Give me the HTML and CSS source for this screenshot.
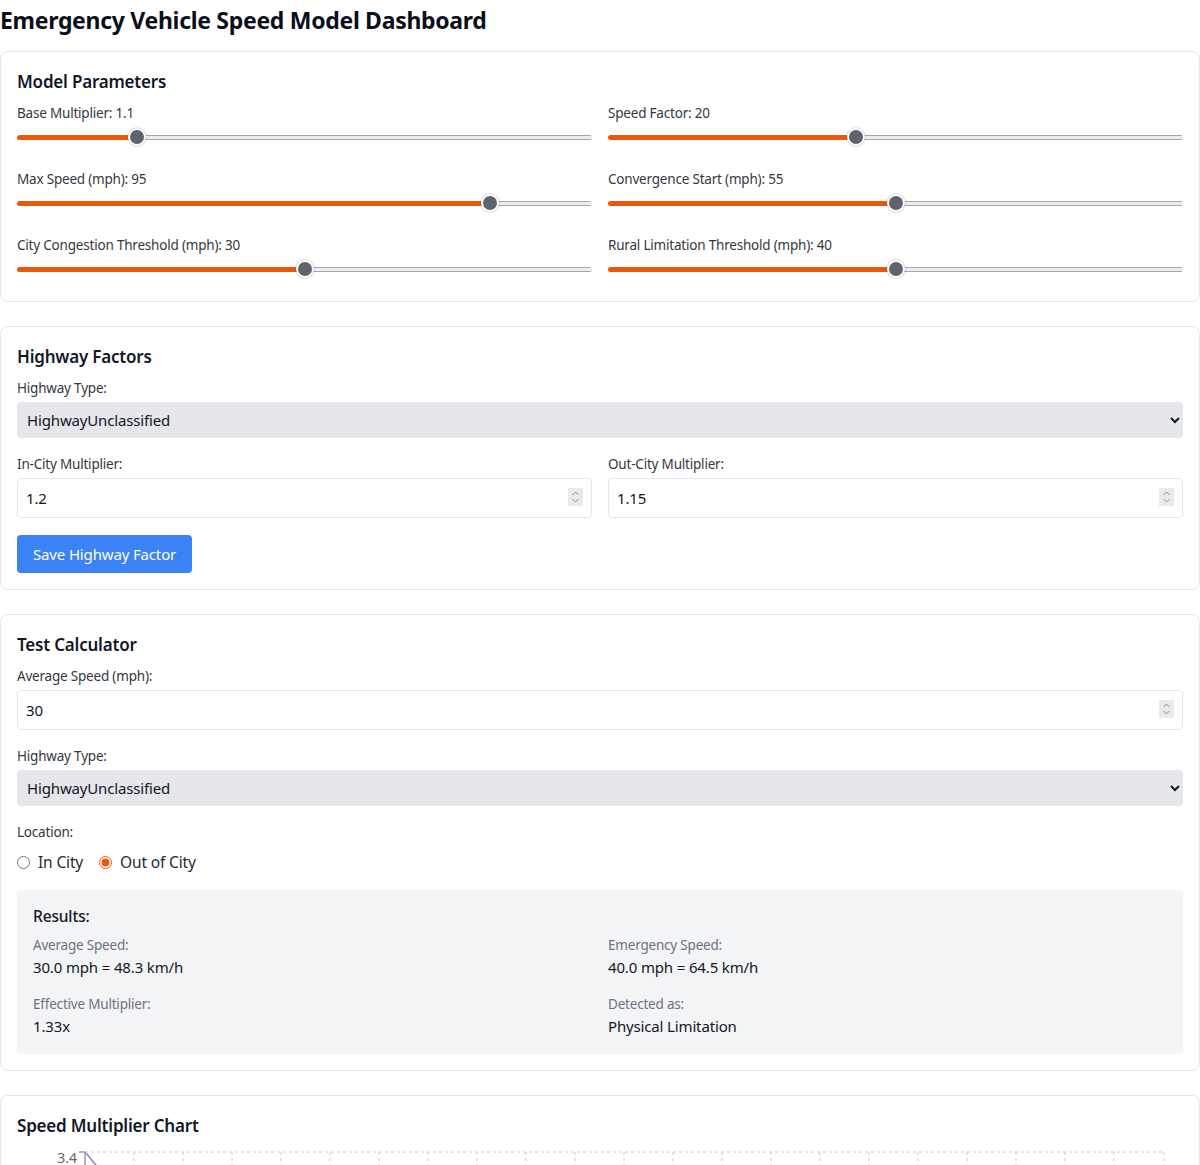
FILE: index.html
```html
<!DOCTYPE html>
<html lang="en">
<head>
<meta charset="utf-8">
<title>Emergency Vehicle Speed Model Dashboard</title>
<link rel="stylesheet" href="styles.css">
</head>
<body>
<div class="page">
  <h1 class="title">Emergency Vehicle Speed Model Dashboard</h1>

  <section class="card">
    <h2 class="card-title">Model Parameters</h2>
    <div class="param-grid">
      <div class="field-range">
        <label class="label">Base Multiplier: 1.1</label>
        <input class="slider" type="range" min="1" max="1.5" step="0.1" value="1.1" style="--f:0.2">
      </div>
      <div class="field-range">
        <label class="label">Speed Factor: 20</label>
        <input class="slider" type="range" min="5" max="40" step="1" value="20" style="--f:0.4286">
      </div>
      <div class="field-range">
        <label class="label">Max Speed (mph): 95</label>
        <input class="slider" type="range" min="70" max="100" step="1" value="95" style="--f:0.8333">
      </div>
      <div class="field-range">
        <label class="label">Convergence Start (mph): 55</label>
        <input class="slider" type="range" min="40" max="70" step="1" value="55" style="--f:0.5">
      </div>
      <div class="field-range">
        <label class="label">City Congestion Threshold (mph): 30</label>
        <input class="slider" type="range" min="10" max="50" step="1" value="30" style="--f:0.5">
      </div>
      <div class="field-range">
        <label class="label">Rural Limitation Threshold (mph): 40</label>
        <input class="slider" type="range" min="20" max="60" step="1" value="40" style="--f:0.5">
      </div>
    </div>
  </section>

  <section class="card">
    <h2 class="card-title">Highway Factors</h2>
    <div class="field">
      <label class="label">Highway Type:</label>
      <select class="select"><option>HighwayUnclassified</option></select>
    </div>
    <div class="two-col">
      <div class="field">
        <label class="label">In-City Multiplier:</label>
        <input class="number" type="number" step="0.05" value="1.2">
      </div>
      <div class="field">
        <label class="label">Out-City Multiplier:</label>
        <input class="number" type="number" step="0.05" value="1.15">
      </div>
    </div>
    <button class="btn" type="button">Save Highway Factor</button>
  </section>

  <section class="card">
    <h2 class="card-title">Test Calculator</h2>
    <div class="field">
      <label class="label">Average Speed (mph):</label>
      <input class="number" type="number" value="30">
    </div>
    <div class="field">
      <label class="label">Highway Type:</label>
      <select class="select"><option>HighwayUnclassified</option></select>
    </div>
    <div class="field">
      <label class="label">Location:</label>
      <div class="radios">
        <label class="radio"><input type="radio" name="loc"> In City</label>
        <label class="radio"><input type="radio" name="loc" checked> Out of City</label>
      </div>
    </div>
    <div class="results">
      <h3 class="results-title">Results:</h3>
      <div class="results-grid">
        <div>
          <div class="r-label">Average Speed:</div>
          <div class="r-value">30.0 mph = 48.3 km/h</div>
        </div>
        <div>
          <div class="r-label">Emergency Speed:</div>
          <div class="r-value">40.0 mph = 64.5 km/h</div>
        </div>
        <div>
          <div class="r-label">Effective Multiplier:</div>
          <div class="r-value">1.33x</div>
        </div>
        <div>
          <div class="r-label">Detected as:</div>
          <div class="r-value">Physical Limitation</div>
        </div>
      </div>
    </div>
  </section>

  <section class="card">
    <h2 class="card-title">Speed Multiplier Chart</h2>
    <svg class="chart" width="1166" height="300" viewBox="0 0 1166 300">
      <g stroke="#cccccc" stroke-dasharray="3 3" fill="none">
        <line x1="68" y1="5" x2="1147" y2="5"/>
        <line x1="117" y1="5" x2="117" y2="300"/>
        <line x1="166" y1="5" x2="166" y2="300"/>
        <line x1="215" y1="5" x2="215" y2="300"/>
        <line x1="264" y1="5" x2="264" y2="300"/>
        <line x1="313" y1="5" x2="313" y2="300"/>
        <line x1="362" y1="5" x2="362" y2="300"/>
        <line x1="411" y1="5" x2="411" y2="300"/>
        <line x1="460" y1="5" x2="460" y2="300"/>
        <line x1="509" y1="5" x2="509" y2="300"/>
        <line x1="558" y1="5" x2="558" y2="300"/>
        <line x1="607" y1="5" x2="607" y2="300"/>
        <line x1="656" y1="5" x2="656" y2="300"/>
        <line x1="705" y1="5" x2="705" y2="300"/>
        <line x1="754" y1="5" x2="754" y2="300"/>
        <line x1="803" y1="5" x2="803" y2="300"/>
        <line x1="852" y1="5" x2="852" y2="300"/>
        <line x1="901" y1="5" x2="901" y2="300"/>
        <line x1="950" y1="5" x2="950" y2="300"/>
        <line x1="999" y1="5" x2="999" y2="300"/>
        <line x1="1048" y1="5" x2="1048" y2="300"/>
        <line x1="1097" y1="5" x2="1097" y2="300"/>
        <line x1="1147" y1="5" x2="1147" y2="300"/>
      </g>
      <line x1="68" y1="5" x2="68" y2="300" stroke="#666666"/>
      <line x1="62" y1="5" x2="68" y2="5" stroke="#666666"/>
      <text x="60" y="16" text-anchor="end" class="tick">3.4</text>
      <polyline points="69,6 110,56 150,100" fill="none" stroke="#8884d8" stroke-width="1.5"/>
    </svg>
  </section>
</div>
</body>
</html>
```

FILE: styles.css
```css
* { box-sizing: border-box; }

html, body {
  margin: 0;
  padding: 0;
  background: #ffffff;
}

body {
  font-family: "Noto Sans", "Open Sans", sans-serif;
  color: #111827;
}

.page {
  width: 1200px;
}

.title {
  font-size: 23px;
  line-height: 32px;
  font-weight: 700;
  letter-spacing: -0.3px;
  margin: 4px 0 15px;
  color: #0b0f1a;
}

.card {
  border: 1px solid #e5e7eb;
  border-radius: 8px;
  padding: 16px;
  margin-bottom: 24px;
  background: #fff;
}

.card-title {
  font-size: 17px;
  line-height: 28px;
  font-weight: 600;
  letter-spacing: -0.2px;
  margin: 0 0 7px;
  color: #111827;
}

.label {
  display: block;
  font-size: 13.5px;
  line-height: 20px;
  letter-spacing: -0.2px;
  color: #333842;
  margin-bottom: 4px;
}

.param-grid {
  display: grid;
  grid-template-columns: 1fr 1fr;
  column-gap: 16px;
  row-gap: 16px;
}

.field-range {
  padding-bottom: 6px;
}

.slider {
  -webkit-appearance: none;
  appearance: none;
  display: block;
  width: 100%;
  height: 20px;
  margin: 0;
  background: transparent;
}

.slider::-webkit-slider-runnable-track {
  height: 5px;
  border-radius: 3px;
  background:
    linear-gradient(to right, #ea580c calc(9px + var(--f) * (100% - 18px)), transparent 0),
    linear-gradient(to bottom, #a4a7af 0, #a4a7af 1px, #ecedf0 1px, #ecedf0 4px, #a4a7af 4px);
}

.slider::-webkit-slider-thumb {
  -webkit-appearance: none;
  appearance: none;
  width: 18px;
  height: 18px;
  margin-top: -6.5px;
  border-radius: 50%;
  background: #5f636e;
  border: 2px solid #ffffff;
  box-shadow: 0 0 1.5px rgba(0, 0, 0, 0.45);
}

.field {
  margin-bottom: 16px;
}

.select {
  display: block;
  width: 100%;
  height: 36px;
  border: none;
  border-radius: 4px;
  background-color: #e5e7eb;
  font-family: inherit;
  font-size: 15px;
  letter-spacing: -0.15px;
  color: #111827;
  padding: 0 6px;
}

.two-col {
  display: grid;
  grid-template-columns: 1fr 1fr;
  column-gap: 16px;
}

.number {
  display: block;
  width: 100%;
  height: 40px;
  border: 1px solid #e5e7eb;
  border-radius: 4px;
  padding: 0 8px;
  font-family: inherit;
  font-size: 15px;
  letter-spacing: -0.15px;
  color: #111827;
  background: #fff;
}

.number::-webkit-inner-spin-button {
  -webkit-appearance: none;
  appearance: none;
  opacity: 1;
  width: 15px;
  height: 18px;
  margin: 0;
  background: #e9eaed url("data:image/svg+xml,%3Csvg xmlns='http://www.w3.org/2000/svg' width='15' height='18' viewBox='0 0 15 18'%3E%3Cpath d='M4.5 7 L7.5 4 L10.5 7 M4.5 11 L7.5 14 L10.5 11' fill='none' stroke='%23888b92' stroke-width='1'/%3E%3C/svg%3E") center / 15px 18px no-repeat;
}

.btn {
  display: block;
  margin-top: 17px;
  height: 38px;
  padding: 0 16px;
  border: none;
  border-radius: 4px;
  background: #3b82f6;
  color: #ffffff;
  font-family: inherit;
  font-size: 15px;
  letter-spacing: -0.15px;
}

.two-col .field {
  margin-bottom: 0;
}

.radios {
  display: flex;
  gap: 16px;
  align-items: center;
  padding-top: 4px;
}

.radio {
  display: flex;
  align-items: center;
  gap: 8px;
  font-size: 15.5px;
  line-height: 24px;
  letter-spacing: -0.15px;
  color: #1f2937;
}

.radio input {
  margin: 0;
  width: 13px;
  height: 13px;
  accent-color: #ea580c;
}

.results {
  background: #f3f4f6;
  border-radius: 4px;
  padding: 16px;
}

.results-title {
  font-size: 15.5px;
  line-height: 20px;
  font-weight: 500;
  letter-spacing: -0.15px;
  margin: 0 0 9px;
  color: #111827;
}

.results-grid {
  display: grid;
  grid-template-columns: 1fr 1fr;
  column-gap: 16px;
  row-gap: 15px;
}

.r-label {
  font-size: 13.5px;
  line-height: 20px;
  letter-spacing: -0.2px;
  color: #6b7280;
}

.r-value {
  font-size: 15px;
  line-height: 24px;
  letter-spacing: -0.15px;
  color: #111827;
}

.chart {
  display: block;
}

.tick {
  font-family: "Noto Sans", sans-serif;
  font-size: 14px;
  fill: #666666;
}
```
